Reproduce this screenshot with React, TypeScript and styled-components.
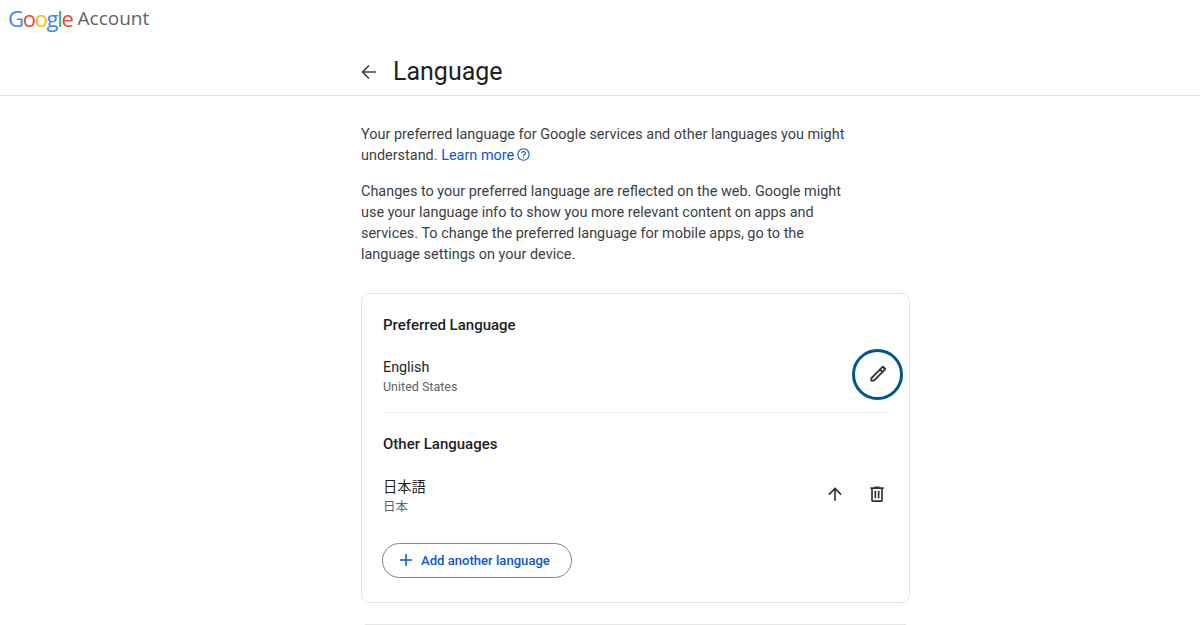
import React from "react";
import styled, { createGlobalStyle } from "styled-components";

const Global = createGlobalStyle`
  html, body { margin: 0; padding: 0; background: #fff; height: 625px; overflow: hidden; }
  body { font-family: Roboto, "Noto Sans CJK JP", sans-serif; color: #202124; }
`;

const TopBar = styled.header`
  height: 37px;
  display: flex;
  align-items: center;
  padding-left: 8px;
  gap: 5px;
`;
const Logo = styled.div`
  font-family: "Open Sans", sans-serif;
  font-size: 22px;
  font-weight: 500;
  line-height: 37px;
  letter-spacing: -1.3px;
  display: flex;
`;
const Letter = styled.span<{ $c: string }>`
  color: ${(p) => p.$c};
`;
const LogoWord = styled.span`
  font-size: 19px;
  line-height: 37px;
  color: #5f6368;
  font-family: "Open Sans", sans-serif;
`;
const TitleBar = styled.div`
  height: 46px;
  padding: 12px 0 0 361px;
  border-bottom: 1px solid #e0e0e0;
  display: flex;
  align-items: center;
  gap: 16px;
`;
const BackIcon = styled.svg`
  width: 16px;
  height: 16px;
  fill: none;
  stroke: #3c4043;
  stroke-width: 1.6;
`;
const Title = styled.h1`
  margin: 0;
  font-size: 25px;
  font-weight: 400;
  line-height: 34px;
  color: #1f1f1f;
`;
const Main = styled.main`
  width: 549px;
  margin-left: 361px;
  padding-top: 28px;
`;
const Para = styled.p`
  margin: 0 0 14.5px;
  width: 500px;
  font-size: 14.45px;
  line-height: 21px;
  color: #3c4043;
`;
const Link = styled.a`
  color: #0b57d0;
`;
const HelpIcon = styled.svg`
  width: 13px;
  height: 13px;
  margin-left: 3px;
  vertical-align: -1px;
  fill: none;
  stroke: #0b57d0;
  stroke-width: 1.1;
`;
const Card = styled.section`
  margin-top: 28px;
  height: 310px;
  box-sizing: border-box;
  border: 1px solid #e3e3e3;
  border-radius: 8px;
  padding: 21px 21px 0;
`;
const SectionTitle = styled.h2`
  margin: 0;
  font-size: 15px;
  font-weight: 500;
  line-height: 20px;
  color: #1f1f1f;
`;
const Row = styled.div<{ $gap: number }>`
  display: flex;
  align-items: center;
  justify-content: space-between;
  margin-top: ${(p) => p.$gap}px;
`;
const Names = styled.div`
  display: flex;
  flex-direction: column;
`;
const Name = styled.span`
  font-size: 14.3px;
  line-height: 21px;
  color: #1f1f1f;
`;
const Sub = styled.span`
  font-size: 12.5px;
  line-height: 18px;
  color: #5f6368;
`;
const Divider = styled.hr`
  margin: 16px 0 21px;
  border: 0;
  border-top: 1px solid #ebebeb;
`;
const Actions = styled.div`
  display: flex;
  align-items: center;
  gap: 22px;
  margin: 0 1px 4px 0;
`;
const IconBtn = styled.button`
  padding: 0;
  border: 0;
  background: none;
  width: 20px;
  height: 20px;
  display: flex;
`;
const EditBtn = styled.button`
  width: 51px;
  height: 51px;
  box-sizing: border-box;
  border: 3px solid #01568a;
  border-radius: 50%;
  background: #fff;
  padding: 0;
  display: flex;
  align-items: center;
  justify-content: center;
  margin: -15px -15px -11px 0;
`;
const Glyph = styled.svg`
  width: 20px;
  height: 20px;
  fill: #303134;
`;
const AddBtn = styled.button`
  margin: 27px 0 0 -1px;
  width: 190px;
  height: 35px;
  box-sizing: border-box;
  border: 1px solid #80868b;
  border-radius: 18px;
  background: #fff;
  display: flex;
  align-items: center;
  padding: 0 0 0 17px;
  gap: 9px;
  color: #0b57d0;
  font: 500 13.1px Roboto, sans-serif;
`;
const PlusIcon = styled.svg`
  width: 12px;
  height: 12px;
  stroke: #0b57d0;
  stroke-width: 1.5;
  fill: none;
`;
const NextRule = styled.div`
  margin: 21px 0 0 4px;
  width: 541px;
  border-top: 1px solid #e6e6e6;
`;

const colors: [string, string][] = [
  ["G", "#4285f4"], ["o", "#ea4335"], ["o", "#fbbc05"], ["g", "#4285f4"], ["l", "#34a853"], ["e", "#ea4335"],
];

export default function App() {
  return (
    <>
      <Global />
      <TopBar>
        <Logo>{colors.map(([l, c], i) => <Letter key={i} $c={c}>{l}</Letter>)}</Logo>
        <LogoWord>Account</LogoWord>
      </TopBar>
      <TitleBar>
        <BackIcon viewBox="0 0 16 16"><path d="M15 8H1.5M8 1.5 1.5 8 8 14.5" /></BackIcon>
        <Title>Language</Title>
      </TitleBar>
      <Main>
        <Para>
          Your preferred language for Google services and other languages you might understand.{" "}
          <Link>Learn more</Link>
          <HelpIcon viewBox="0 0 13 13">
            <circle cx="6.5" cy="6.5" r="5.7" />
            <path d="M4.7 5.2a1.8 1.8 0 1 1 2.8 1.5c-.7.4-1 .8-1 1.5M6.5 9.2v1" />
          </HelpIcon>
        </Para>
        <Para>
          Changes to your preferred language are reflected on the web. Google might use your language info to show you more relevant content on apps and services. To change the preferred language for mobile apps, go to the language settings on your device.
        </Para>
        <Card>
          <SectionTitle>Preferred Language</SectionTitle>
          <Row $gap={22}>
            <Names>
              <Name>English</Name>
              <Sub>United States</Sub>
            </Names>
            <EditBtn aria-label="Edit">
              <Glyph viewBox="0 0 24 24"><path d="M3 21v-4.6L16.4 3a2.2 2.2 0 0 1 3.1 0l1.5 1.5a2.2 2.2 0 0 1 0 3.1L7.6 21H3Zm2.2-2.2h1.5L15.9 9.6l-1.5-1.5-9.2 9.2v1.5Zm12.2-10.7 1.7-1.7-1.5-1.5-1.7 1.7 1.5 1.5Z" /></Glyph>
            </EditBtn>
          </Row>
          <Divider />
          <SectionTitle>Other Languages</SectionTitle>
          <Row $gap={23}>
            <Names>
              <Name>日本語</Name>
              <Sub>日本</Sub>
            </Names>
            <Actions>
              <IconBtn aria-label="Move up">
                <Glyph viewBox="0 0 24 24"><path d="M11 20V7.8l-5.6 5.6L4 12l8-8 8 8-1.4 1.4L13 7.8V20h-2Z" /></Glyph>
              </IconBtn>
              <IconBtn aria-label="Delete">
                <Glyph viewBox="0 0 24 24"><path d="M7 21.500a2 2 0 0 1-2-2V6H4V4h5V3h6v1h5v2h-1v13.500a2 2 0 0 1-2 2H7ZM17 6H7v13.500h10V6ZM9 17h2V8H9v9Zm4 0h2V8h-2v9Z" /></Glyph>
              </IconBtn>
            </Actions>
          </Row>
          <AddBtn>
            <PlusIcon viewBox="0 0 12 12"><path d="M6 0v12M0 6h12" /></PlusIcon>
            Add another language
          </AddBtn>
        </Card>
        <NextRule />
      </Main>
    </>
  );
}
